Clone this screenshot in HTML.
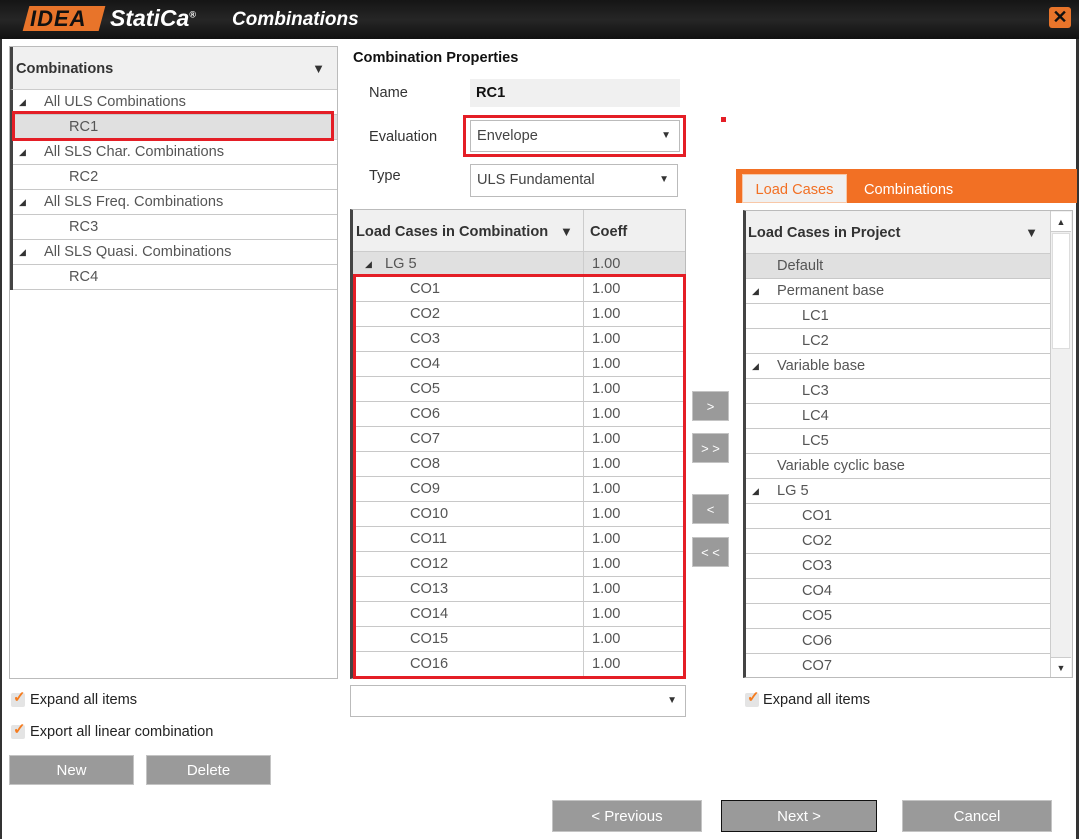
<!DOCTYPE html>
<html><head><meta charset="utf-8"><style>
*{margin:0;padding:0;box-sizing:border-box}
body{width:1079px;height:839px;position:relative;background:#fff;font-family:"Liberation Sans",sans-serif;font-size:14.6px;color:#333;overflow:hidden}
.a{position:absolute}
.title{left:0;top:0;width:1079px;height:39px;background:linear-gradient(#151515,#262626 50%,#111)}
.rows div{position:absolute;left:0;right:0;height:25px;border-bottom:1px solid #c8c8c8;line-height:24px;background:#fff}
.t{position:absolute;font-size:9px;color:#333}
.hd{background:#f0f0f0;font-weight:bold;color:#333;border-left:3px solid #444}
.btn{background:#9a9a9a;border:1px solid #c4c4c4;color:#fff;text-align:center;font-size:15px}
.dd{border:1px solid #bbb;background:#fff;line-height:30px;padding-left:6px;color:#444}
.tri{position:absolute;right:8px;top:0;font-size:10px;color:#333}
.cb{width:14px;height:14px;background:#e4e4e4;border-radius:2px}
.ck{color:#f57c1f;font-weight:bold;font-size:15px;left:2px;top:-5px;position:absolute}
</style></head><body>
<div class="a title"></div>
<div class="a" style="left:26px;top:6px;width:76px;height:25px;background:#e8742a;transform:skewX(-15deg)"></div>
<div class="a" style="left:30px;top:6px;font:italic bold 22px 'Liberation Sans';color:#111;letter-spacing:1px">IDEA</div>
<div class="a" style="left:110px;top:5px;font:italic bold 23px 'Liberation Sans';color:#fff">StatiCa<sup style="font-size:9px">®</sup></div>
<div class="a" style="left:232px;top:9px;font:italic bold 19px 'Liberation Sans';color:#fff">Combinations</div>
<div class="a" style="left:1049px;top:7px;width:22px;height:21px;background:#e8742a;border-radius:3px;color:#111;font-weight:bold;text-align:center;line-height:21px;font-size:18px">✕</div>
<div class="a" style="left:0;top:39px;width:2px;height:800px;background:#333"></div>
<div class="a" style="left:1076px;top:39px;width:3px;height:800px;background:#333"></div>

<!-- left panel -->
<div class="a" style="left:9px;top:46px;width:329px;height:633px;border:1px solid #bbb"></div>
<div class="a hd" style="left:10px;top:47px;width:327px;height:43px;line-height:44px;padding-left:3px;border-bottom:1px solid #ccc">Combinations<span style="position:absolute;right:12px;font-size:13px">▼</span></div>
<div class="a rows" style="left:10px;top:90px;width:327px;height:200px;border-left:3px solid #444;color:#555">
<div style="top:0;padding-left:31px"><span class="t" style="left:6px">◢</span>All ULS Combinations</div>
<div style="top:25px;padding-left:56px;background:#e0e0e0">RC1</div>
<div style="top:50px;padding-left:31px"><span class="t" style="left:6px">◢</span>All SLS Char. Combinations</div>
<div style="top:75px;padding-left:56px">RC2</div>
<div style="top:100px;padding-left:31px"><span class="t" style="left:6px">◢</span>All SLS Freq. Combinations</div>
<div style="top:125px;padding-left:56px">RC3</div>
<div style="top:150px;padding-left:31px"><span class="t" style="left:6px">◢</span>All SLS Quasi. Combinations</div>
<div style="top:175px;padding-left:56px">RC4</div>
</div>
<div class="a" style="left:12px;top:111px;width:322px;height:30px;border:3px solid #e41e26"></div>

<!-- properties -->
<div class="a" style="left:353px;top:50px;font-weight:bold;color:#111">Combination Properties</div>
<div class="a" style="left:369px;top:85px">Name</div>
<div class="a" style="left:470px;top:79px;width:210px;height:28px;background:#f0f0f0;font-weight:bold;color:#111;line-height:29px;padding-left:6px">RC1</div>
<div class="a" style="left:369px;top:129px">Evaluation</div>
<div class="a dd" style="left:470px;top:120px;width:210px;height:32px">Envelope<span class="tri">▼</span></div>
<div class="a" style="left:463px;top:115px;width:223px;height:42px;border:3px solid #e41e26"></div>
<div class="a" style="left:721px;top:117px;width:5px;height:5px;background:#e41e26"></div>
<div class="a" style="left:369px;top:168px">Type</div>
<div class="a dd" style="left:470px;top:164px;width:208px;height:33px">ULS Fundamental<span class="tri">▼</span></div>

<!-- middle table -->
<div class="a" style="left:350px;top:209px;width:336px;height:470px;border:1px solid #bbb;border-left:3px solid #444"></div>
<div class="a hd" style="left:353px;top:210px;width:332px;height:42px;line-height:44px;border-left:none;padding-left:3px;border-bottom:1px solid #ccc">Load Cases in Combination<span style="position:absolute;left:207px;font-size:13px">▼</span><span style="position:absolute;left:237px">Coeff</span></div>
<div class="a" style="left:583px;top:210px;width:1px;height:468px;background:#ccc;z-index:2"></div>
<div class="a rows" style="left:353px;top:252px;width:332px;height:425px;color:#555">
<div style="top:0;background:#e0e0e0;padding-left:32px"><span class="t" style="left:12px">◢</span>LG 5<span style="position:absolute;left:239px">1.00</span></div>
<div style="top:25px;padding-left:57px">CO1<span style="position:absolute;left:239px">1.00</span></div>
<div style="top:50px;padding-left:57px">CO2<span style="position:absolute;left:239px">1.00</span></div>
<div style="top:75px;padding-left:57px">CO3<span style="position:absolute;left:239px">1.00</span></div>
<div style="top:100px;padding-left:57px">CO4<span style="position:absolute;left:239px">1.00</span></div>
<div style="top:125px;padding-left:57px">CO5<span style="position:absolute;left:239px">1.00</span></div>
<div style="top:150px;padding-left:57px">CO6<span style="position:absolute;left:239px">1.00</span></div>
<div style="top:175px;padding-left:57px">CO7<span style="position:absolute;left:239px">1.00</span></div>
<div style="top:200px;padding-left:57px">CO8<span style="position:absolute;left:239px">1.00</span></div>
<div style="top:225px;padding-left:57px">CO9<span style="position:absolute;left:239px">1.00</span></div>
<div style="top:250px;padding-left:57px">CO10<span style="position:absolute;left:239px">1.00</span></div>
<div style="top:275px;padding-left:57px">CO11<span style="position:absolute;left:239px">1.00</span></div>
<div style="top:300px;padding-left:57px">CO12<span style="position:absolute;left:239px">1.00</span></div>
<div style="top:325px;padding-left:57px">CO13<span style="position:absolute;left:239px">1.00</span></div>
<div style="top:350px;padding-left:57px">CO14<span style="position:absolute;left:239px">1.00</span></div>
<div style="top:375px;padding-left:57px">CO15<span style="position:absolute;left:239px">1.00</span></div>
<div style="top:400px;padding-left:57px;border-bottom:none">CO16<span style="position:absolute;left:239px">1.00</span></div>
</div>
<div class="a" style="left:353px;top:274px;width:333px;height:405px;border:3px solid #e41e26;z-index:3"></div>
<div class="a dd" style="left:350px;top:685px;width:336px;height:32px"><span class="tri">▼</span></div>

<!-- arrow buttons -->
<div class="a btn" style="left:692px;top:391px;width:37px;height:30px;line-height:30px;font-size:13px">&gt;</div>
<div class="a btn" style="left:692px;top:433px;width:37px;height:30px;line-height:30px;font-size:13px">&gt; &gt;</div>
<div class="a btn" style="left:692px;top:494px;width:37px;height:30px;line-height:30px;font-size:13px">&lt;</div>
<div class="a btn" style="left:692px;top:537px;width:37px;height:30px;line-height:30px;font-size:13px">&lt; &lt;</div>

<!-- right panel -->
<div class="a" style="left:736px;top:169px;width:341px;height:34px;background:#f27024"></div>
<div class="a" style="left:742px;top:174px;width:105px;height:29px;background:#f0f0f0;border:1px solid #f8c8a8;color:#f27024;text-align:center;line-height:30px">Load Cases</div>
<div class="a" style="left:864px;top:182px;color:#fff">Combinations</div>
<div class="a" style="left:743px;top:210px;width:330px;height:468px;border:1px solid #bbb;border-left:3px solid #444"></div>
<div class="a hd" style="left:746px;top:211px;width:304px;height:43px;line-height:44px;border-left:none;padding-left:2px;border-bottom:1px solid #ccc">Load Cases in Project<span style="position:absolute;right:12px;font-size:13px">▼</span></div>
<div class="a" style="left:1050px;top:211px;width:22px;height:466px;background:#f0f0f0;border-left:1px solid #ccc"></div>
<div class="a" style="left:1051px;top:212px;width:20px;height:20px;background:#fff;border-bottom:1px solid #ccc;font-size:9px;text-align:center;line-height:20px">▲</div>
<div class="a" style="left:1052px;top:233px;width:18px;height:116px;background:#fff;border:1px solid #ddd"></div>
<div class="a" style="left:1051px;top:657px;width:20px;height:20px;background:#fff;border-top:1px solid #ccc;font-size:9px;text-align:center;line-height:20px">▼</div>
<div class="a rows" style="left:746px;top:254px;width:304px;height:423px;color:#555;overflow:hidden">
<div style="top:0;background:#e0e0e0;padding-left:31px">Default</div>
<div style="top:25px;padding-left:31px"><span class="t" style="left:6px">◢</span>Permanent base</div>
<div style="top:50px;padding-left:56px">LC1</div>
<div style="top:75px;padding-left:56px">LC2</div>
<div style="top:100px;padding-left:31px"><span class="t" style="left:6px">◢</span>Variable base</div>
<div style="top:125px;padding-left:56px">LC3</div>
<div style="top:150px;padding-left:56px">LC4</div>
<div style="top:175px;padding-left:56px">LC5</div>
<div style="top:200px;padding-left:31px">Variable cyclic base</div>
<div style="top:225px;padding-left:31px"><span class="t" style="left:6px">◢</span>LG 5</div>
<div style="top:250px;padding-left:56px">CO1</div>
<div style="top:275px;padding-left:56px">CO2</div>
<div style="top:300px;padding-left:56px">CO3</div>
<div style="top:325px;padding-left:56px">CO4</div>
<div style="top:350px;padding-left:56px">CO5</div>
<div style="top:375px;padding-left:56px">CO6</div>
<div style="top:400px;padding-left:56px;border-bottom:none">CO7</div>
</div>

<!-- checkboxes -->
<div class="a cb" style="left:11px;top:693px"><span class="ck">✓</span></div>
<div class="a" style="left:30px;top:692px;color:#222">Expand all items</div>
<div class="a cb" style="left:11px;top:725px"><span class="ck">✓</span></div>
<div class="a" style="left:30px;top:724px;color:#222">Export all linear combination</div>
<div class="a cb" style="left:745px;top:693px"><span class="ck">✓</span></div>
<div class="a" style="left:763px;top:692px;color:#222">Expand all items</div>

<!-- buttons -->
<div class="a btn" style="left:9px;top:755px;width:125px;height:30px;line-height:30px">New</div>
<div class="a btn" style="left:146px;top:755px;width:125px;height:30px;line-height:30px">Delete</div>
<div class="a btn" style="left:552px;top:800px;width:150px;height:32px;line-height:32px">&lt; Previous</div>
<div class="a btn" style="left:721px;top:800px;width:156px;height:32px;line-height:32px;border:1px solid #111">Next &gt;</div>
<div class="a btn" style="left:902px;top:800px;width:150px;height:32px;line-height:32px">Cancel</div>
</body></html>
